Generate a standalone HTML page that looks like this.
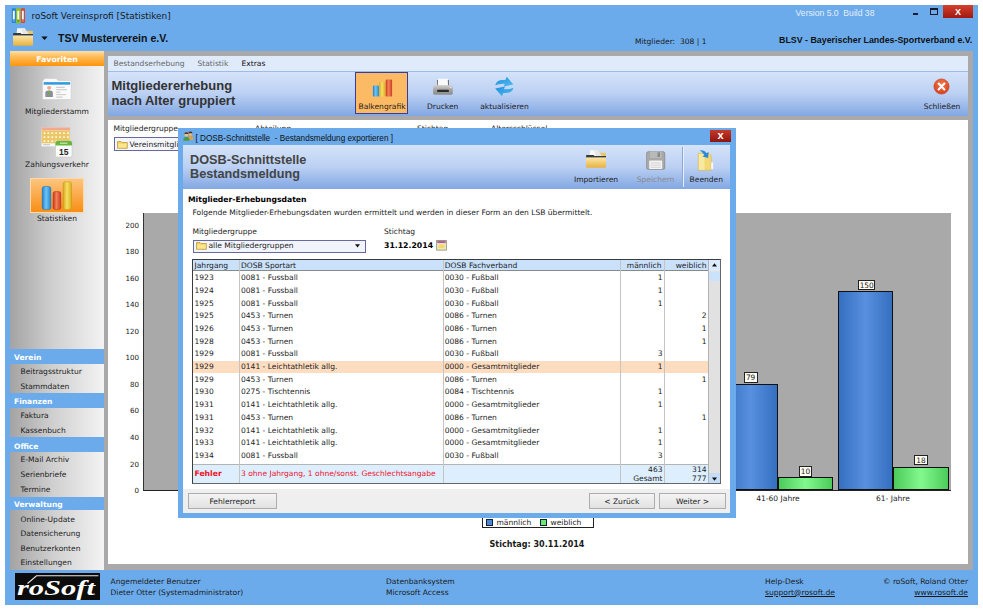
<!DOCTYPE html>
<html lang="de">
<head>
<meta charset="utf-8">
<title>roSoft Vereinsprofi [Statistiken]</title>
<style>
html,body{margin:0;padding:0;background:#fff;}
body{width:983px;height:610px;position:relative;overflow:hidden;font-family:"DejaVu Sans","Liberation Sans",sans-serif;font-size:7.55px;color:#1a1a1a;}
.a{position:absolute;}
.t{position:absolute;white-space:pre;line-height:12px;height:12px;font-size:7.55px;color:#1a1a1a;}
.ar{font-family:"Liberation Sans",sans-serif;}
.b{font-weight:bold;}
.c{text-align:center;}
.r{text-align:right;}
#win{left:5px;top:5px;width:973px;height:600px;background:#6babeb;}
#frame{left:104px;top:51px;width:869px;height:518.8px;background:#a9a9a9;}
#main{left:108px;top:56px;width:860px;height:508.4px;background:#fff;}
#menubar{left:108px;top:56px;width:860px;height:15px;background:#dfeafb;border-bottom:1px solid #9ebce9;}
#hdr{left:108px;top:72px;width:860px;height:44px;background:linear-gradient(#d5e3f9 0%,#bbd0f3 50%,#82a7e3 100%);}
#hdrgap{left:108px;top:116px;width:860px;height:3.5px;background:#a9a9a9;}
.side{left:10px;width:94px;background:linear-gradient(90deg,#a3a3a3 0%,#cfcfcf 45%,#f3f3f3 100%);}
.sh{position:absolute;left:14px;color:#fff;font-weight:bold;font-size:7.55px;white-space:pre;line-height:12px;}
.si{position:absolute;left:20.5px;font-size:7.55px;white-space:pre;line-height:12px;color:#1a1a1a;}

.yl{left:108px;width:31px;font-size:7.1px;}
.bb{background:linear-gradient(90deg,#356fc0 0%,#5990e0 50%,#356fc0 100%);border:1px solid #111;box-sizing:border-box;}
.bg{background:linear-gradient(90deg,#4ccb5a 0%,#82f98e 50%,#4ccb5a 100%);border:1px solid #111;box-sizing:border-box;}
.vl{background:#fffef2;border:1px solid #222;box-sizing:border-box;height:10.5px;line-height:9px;font-size:7.4px;}

#dlg{left:178px;top:128px;width:557.5px;height:390px;background:#6babeb;}
#dlghdr{left:183px;top:145px;width:547px;height:44px;background:linear-gradient(#d5e3f9 0%,#bbd0f3 50%,#82a7e3 100%);}
#dlgbody{left:183px;top:189px;width:547px;height:324px;background:linear-gradient(#fff 0,#fff 299.8px,#efefef 299.8px,#efefef 100%);}
#tbl{left:192px;top:259px;width:529px;height:225px;background:#fff;}
#rows{left:192.5px;top:0;width:516px;height:0;}
.row{left:0;width:516px;height:12.64px;}
.row .t{top:0.6px;}
.hl{background:#fddcc0;}
.btn{background:linear-gradient(#f4f4f4,#e2e2e2);border:1px solid #adadad;box-sizing:border-box;}
</style>
</head>
<body>
<div class="a" id="win"></div>

<!-- title bar -->
<div class="t" style="left:31.5px;top:10px;font-size:8.93px;">roSoft Vereinsprofi [Statistiken]</div>
<div class="t ar" style="left:795.6px;top:7.2px;font-size:8.6px;color:#e4eefc;">Version 5.0  Build 38</div>
<div class="t ar b" style="left:58px;top:32px;font-size:10.6px;color:#111;">TSV Musterverein e.V.</div>
<div class="t" style="left:635px;top:36px;">Mitglieder:  308 | 1</div>
<div class="t ar b" style="left:779px;top:34px;font-size:8.85px;color:#111;">BLSV - Bayerischer Landes-Sportverband e.V.</div>

<!-- sidebar -->
<div class="a side" style="top:51px;height:298px;"></div>
<div class="a" style="left:10px;top:51px;width:94px;height:14.8px;background:linear-gradient(#ffe0a2 0%,#ffba54 40%,#fc950c 100%);"></div>
<div class="t b c" style="left:10px;width:94px;top:53.8px;font-size:7.8px;color:#fff;">Favoriten</div>
<div class="t c" style="left:10px;width:94px;top:106.1px;font-size:7.55px;">Mitgliederstamm</div>
<div class="t c" style="left:10px;width:94px;top:159.3px;font-size:7.55px;">Zahlungsverkehr</div>
<div class="a" style="left:30px;top:177.8px;width:54px;height:35.4px;background:linear-gradient(#fec680,#f88d12);box-shadow:0 0 0 1px #fbd9a8 inset;"></div>
<div class="t c" style="left:10px;width:94px;top:213px;font-size:7.55px;">Statistiken</div>

<div class="sh" style="top:352.2px;">Verein</div>
<div class="a side" style="top:363.6px;height:29.6px;"></div>
<div class="si" style="top:366.4px;">Beitragsstruktur</div>
<div class="si" style="top:381.4px;">Stammdaten</div>
<div class="sh" style="top:396.2px;">Finanzen</div>
<div class="a side" style="top:407.7px;height:29.8px;"></div>
<div class="si" style="top:409.8px;">Faktura</div>
<div class="si" style="top:425.2px;">Kassenbuch</div>
<div class="sh" style="top:440.5px;">Office</div>
<div class="a side" style="top:452px;height:45px;"></div>
<div class="si" style="top:454px;">E-Mail Archiv</div>
<div class="si" style="top:468.5px;">Serienbriefe</div>
<div class="si" style="top:483.6px;">Termine</div>
<div class="sh" style="top:499.3px;">Verwaltung</div>
<div class="a side" style="top:510px;height:59.8px;"></div>
<div class="si" style="top:513.6px;">Online-Update</div>
<div class="si" style="top:527.8px;">Datensicherung</div>
<div class="si" style="top:542.6px;">Benutzerkonten</div>
<div class="si" style="top:557.3px;">Einstellungen</div>

<!-- main frame -->
<div class="a" id="frame"></div>
<div class="a" id="main"></div>
<div class="a" id="menubar"></div>
<div class="a" id="hdr"></div>
<div class="a" id="hdrgap"></div>
<div class="t" style="left:113.5px;top:58px;color:#666;">Bestandserhebung</div>
<div class="t" style="left:197.5px;top:58px;color:#666;">Statistik</div>
<div class="t" style="left:241.5px;top:58px;color:#111;">Extras</div>
<div class="t ar b" style="left:111.5px;top:78.8px;font-size:13px;line-height:14px;color:#333;">Mitgliedererhebung</div>
<div class="t ar b" style="left:111.5px;top:93.8px;font-size:13px;line-height:14px;color:#333;">nach Alter gruppiert</div>


<!-- filter labels behind dialog -->
<div class="t" style="left:113.5px;top:122.5px;">Mitgliedergruppe</div>
<div class="t" style="left:255px;top:122.5px;">Abteilung</div>
<div class="t" style="left:417px;top:122.5px;">Stichtag</div>
<div class="t" style="left:491px;top:122.5px;">Altersschlüssel</div>
<div class="a" style="left:113.5px;top:137px;width:120px;height:13.6px;border:1px solid #66689e;background:#f4f6fc;box-sizing:border-box;"></div>
<div class="t" style="left:129.5px;top:138.9px;">Vereinsmitglieder</div>

<!-- chart -->
<div class="a" style="left:143.5px;top:212.5px;width:807.5px;height:277.5px;background:#a9a9a9;"></div>
<div class="a" style="left:143px;top:490px;width:808px;height:1px;background:#222;"></div>
<div class="a" style="left:143px;top:212.5px;width:1px;height:278px;background:#333;"></div>
<div class="t r yl" style="top:219.60px;">200</div>
<div class="t r yl" style="top:246.15px;">180</div>
<div class="t r yl" style="top:272.70px;">160</div>
<div class="t r yl" style="top:299.25px;">140</div>
<div class="t r yl" style="top:325.80px;">120</div>
<div class="t r yl" style="top:352.35px;">100</div>
<div class="t r yl" style="top:378.90px;">80</div>
<div class="t r yl" style="top:405.45px;">60</div>
<div class="t r yl" style="top:432.00px;">40</div>
<div class="t r yl" style="top:458.55px;">20</div>
<div class="t r yl" style="top:485.10px;">0</div>
<div class="a bb" style="left:722.5px;top:384.3px;width:55px;height:105.7px;"></div>
<div class="a bg" style="left:778px;top:477px;width:55px;height:13px;"></div>
<div class="a bb" style="left:838.2px;top:291.2px;width:55px;height:198.8px;"></div>
<div class="a bg" style="left:893px;top:466.5px;width:56px;height:23.5px;"></div>
<div class="t c vl" style="left:743.6px;width:14px;top:372.2px;">79</div>
<div class="t c vl" style="left:798.8px;width:13.5px;top:466px;">10</div>
<div class="t c vl" style="left:858px;width:17.4px;top:279.6px;">150</div>
<div class="t c vl" style="left:914.2px;width:13.5px;top:454.5px;">18</div>
<div class="t c" style="left:728px;width:100px;top:492.9px;">41-60 Jahre</div>
<div class="t c" style="left:843px;width:100px;top:492.9px;">61- Jahre</div>
<div class="a" style="left:482.4px;top:510px;width:112px;height:18px;border:1px solid #222;box-sizing:border-box;background:#fff;"></div>
<div class="a" style="left:485.8px;top:518.6px;width:7px;height:7px;background:#4a86d8;border:1px solid #123;box-sizing:border-box;"></div>
<div class="t" style="left:496.5px;top:516.8px;">männlich</div>
<div class="a" style="left:539.5px;top:518.6px;width:7px;height:7px;background:#6be878;border:1px solid #123;box-sizing:border-box;"></div>
<div class="t" style="left:550.5px;top:516.8px;">weiblich</div>
<div class="t b c" style="left:437px;width:200px;top:539px;font-size:8.05px;">Stichtag: 30.11.2014</div>


<!-- dialog -->
<div class="a" id="dlg"></div>
<div class="a" id="dlghdr"></div>
<div class="a" id="dlgbody"></div>
<div class="t ar" style="left:195.5px;top:132.6px;font-size:8.2px;color:#111;">[ DOSB-Schnittstelle  - Bestandsmeldung exportieren ]</div>
<div class="a" style="left:710.2px;top:129.6px;width:20.8px;height:12.4px;background:linear-gradient(#c83826,#8c1610);"></div>
<div class="t ar b c" style="left:710.2px;width:20.8px;top:128.6px;font-size:11px;color:#fff;">x</div>
<div class="t ar b" style="left:190px;top:152.6px;font-size:12.7px;line-height:14px;color:#444;">DOSB-Schnittstelle</div>
<div class="t ar b" style="left:190px;top:167px;font-size:12.7px;line-height:14px;color:#444;">Bestandsmeldung</div>
<div class="t c" style="left:566px;width:60px;top:173.7px;">Importieren</div>
<div class="t c" style="left:625.5px;width:60px;top:173.7px;color:#8a8a8a;">Speichern</div>
<div class="t c" style="left:676.3px;width:60px;top:173.7px;">Beenden</div>
<div class="a" style="left:681.5px;top:147px;width:1px;height:40px;background:#8aa6dc;"></div>
<div class="a" style="left:682.5px;top:147px;width:1px;height:40px;background:#e8f0fc;"></div>

<div class="t b" style="left:188px;top:193.5px;font-size:7.67px;color:#000;">Mitglieder-Erhebungsdaten</div>
<div class="t" style="left:192.5px;top:206.9px;">Folgende Mitglieder-Erhebungsdaten wurden ermittelt und werden in dieser Form an den LSB übermittelt.</div>
<div class="t" style="left:192.5px;top:226.1px;">Mitgliedergruppe</div>
<div class="t" style="left:384px;top:226.1px;">Stichtag</div>
<div class="a" style="left:192.5px;top:239.7px;width:173px;height:13px;border:1px solid #66689e;background:#f1f4fb;box-sizing:border-box;"></div>
<div class="t" style="left:208.5px;top:240.3px;">alle Mitgliedergruppen</div>
<svg class="a" style="left:355px;top:244.3px;" width="5" height="4" viewBox="0 0 5 4"><path d="M0 0.300 L2.500 3.500 L5 0.300 Z" fill="#111"/></svg>
<div class="t b" style="left:384px;top:240.1px;font-size:7.75px;color:#000;">31.12.2014</div>

<div class="a" id="tbl">
<div class="a" style="left:0;top:0;width:529px;height:11.2px;background:#c9e1fb;border-bottom:1px solid #8a8a8a;"></div>
<div class="a" style="left:0;top:204.6px;width:517px;height:20.4px;background:#ddeeff;border-top:1px solid #b4b4b4;box-sizing:border-box;"></div>
</div>
<div class="a" id="rows">
<div class="a row" style="top:271.75px;"><span class="t" style="left:2px;">1923</span><span class="t" style="left:48.5px;">0081 - Fussball</span><span class="t" style="left:252.2px;">0030 - Fußball</span><span class="t r" style="left:428px;width:42px;">1</span><span class="t r" style="left:472px;width:42px;"></span></div>
<div class="a row" style="top:284.43px;"><span class="t" style="left:2px;">1924</span><span class="t" style="left:48.5px;">0081 - Fussball</span><span class="t" style="left:252.2px;">0030 - Fußball</span><span class="t r" style="left:428px;width:42px;">1</span><span class="t r" style="left:472px;width:42px;"></span></div>
<div class="a row" style="top:297.11px;"><span class="t" style="left:2px;">1925</span><span class="t" style="left:48.5px;">0081 - Fussball</span><span class="t" style="left:252.2px;">0030 - Fußball</span><span class="t r" style="left:428px;width:42px;">1</span><span class="t r" style="left:472px;width:42px;"></span></div>
<div class="a row" style="top:309.79px;"><span class="t" style="left:2px;">1925</span><span class="t" style="left:48.5px;">0453 - Turnen</span><span class="t" style="left:252.2px;">0086 - Turnen</span><span class="t r" style="left:428px;width:42px;"></span><span class="t r" style="left:472px;width:42px;">2</span></div>
<div class="a row" style="top:322.47px;"><span class="t" style="left:2px;">1926</span><span class="t" style="left:48.5px;">0453 - Turnen</span><span class="t" style="left:252.2px;">0086 - Turnen</span><span class="t r" style="left:428px;width:42px;"></span><span class="t r" style="left:472px;width:42px;">1</span></div>
<div class="a row" style="top:335.15px;"><span class="t" style="left:2px;">1928</span><span class="t" style="left:48.5px;">0453 - Turnen</span><span class="t" style="left:252.2px;">0086 - Turnen</span><span class="t r" style="left:428px;width:42px;"></span><span class="t r" style="left:472px;width:42px;">1</span></div>
<div class="a row" style="top:347.83px;"><span class="t" style="left:2px;">1929</span><span class="t" style="left:48.5px;">0081 - Fussball</span><span class="t" style="left:252.2px;">0030 - Fußball</span><span class="t r" style="left:428px;width:42px;">3</span><span class="t r" style="left:472px;width:42px;"></span></div>
<div class="a row hl" style="top:360.51px;"><span class="t" style="left:2px;">1929</span><span class="t" style="left:48.5px;">0141 - Leichtathletik allg.</span><span class="t" style="left:252.2px;">0000 - Gesamtmitglieder</span><span class="t r" style="left:428px;width:42px;">1</span><span class="t r" style="left:472px;width:42px;"></span></div>
<div class="a row" style="top:373.19px;"><span class="t" style="left:2px;">1929</span><span class="t" style="left:48.5px;">0453 - Turnen</span><span class="t" style="left:252.2px;">0086 - Turnen</span><span class="t r" style="left:428px;width:42px;"></span><span class="t r" style="left:472px;width:42px;">1</span></div>
<div class="a row" style="top:385.87px;"><span class="t" style="left:2px;">1930</span><span class="t" style="left:48.5px;">0275 - Tischtennis</span><span class="t" style="left:252.2px;">0084 - Tischtennis</span><span class="t r" style="left:428px;width:42px;">1</span><span class="t r" style="left:472px;width:42px;"></span></div>
<div class="a row" style="top:398.55px;"><span class="t" style="left:2px;">1931</span><span class="t" style="left:48.5px;">0141 - Leichtathletik allg.</span><span class="t" style="left:252.2px;">0000 - Gesamtmitglieder</span><span class="t r" style="left:428px;width:42px;">1</span><span class="t r" style="left:472px;width:42px;"></span></div>
<div class="a row" style="top:411.23px;"><span class="t" style="left:2px;">1931</span><span class="t" style="left:48.5px;">0453 - Turnen</span><span class="t" style="left:252.2px;">0086 - Turnen</span><span class="t r" style="left:428px;width:42px;"></span><span class="t r" style="left:472px;width:42px;">1</span></div>
<div class="a row" style="top:423.91px;"><span class="t" style="left:2px;">1932</span><span class="t" style="left:48.5px;">0141 - Leichtathletik allg.</span><span class="t" style="left:252.2px;">0000 - Gesamtmitglieder</span><span class="t r" style="left:428px;width:42px;">1</span><span class="t r" style="left:472px;width:42px;"></span></div>
<div class="a row" style="top:436.59px;"><span class="t" style="left:2px;">1933</span><span class="t" style="left:48.5px;">0141 - Leichtathletik allg.</span><span class="t" style="left:252.2px;">0000 - Gesamtmitglieder</span><span class="t r" style="left:428px;width:42px;">1</span><span class="t r" style="left:472px;width:42px;"></span></div>
<div class="a row" style="top:449.27px;"><span class="t" style="left:2px;">1934</span><span class="t" style="left:48.5px;">0081 - Fussball</span><span class="t" style="left:252.2px;">0030 - Fußball</span><span class="t r" style="left:428px;width:42px;">3</span><span class="t r" style="left:472px;width:42px;"></span></div>
</div>
<div class="a" style="left:239px;top:259px;width:1px;height:225px;background:#c4c4c4;"></div>
<div class="a" style="left:443px;top:259px;width:1px;height:225px;background:#c4c4c4;"></div>
<div class="a" style="left:620.4px;top:259px;width:1px;height:225px;background:#c4c4c4;"></div>
<div class="a" style="left:664.2px;top:259px;width:1px;height:225px;background:#c4c4c4;"></div>
<div class="a" style="left:708.3px;top:259px;width:12.7px;height:225px;background:#e1e1e1;border-left:1px solid #b4b4b4;box-sizing:border-box;"></div>
<div class="a" style="left:709.3px;top:271.6px;width:11.7px;height:9.6px;background:#cbe2fb;"></div>
<div class="a" style="left:709.3px;top:260px;width:11.7px;height:10.6px;background:#dbeafc;"></div>
<svg class="a" style="left:712.3px;top:263.3px;" width="5" height="4" viewBox="0 0 5 4"><path d="M0 3.5 L2.500 0.300 L5 3.500 Z" fill="#111"/></svg>
<div class="a" style="left:709.3px;top:472.7px;width:11.7px;height:10.8px;background:#c4dcf8;"></div>
<svg class="a" style="left:712.3px;top:477px;" width="5" height="4" viewBox="0 0 5 4"><path d="M0 0.500 L2.500 3.700 L5 0.500 Z" fill="#111"/></svg>
<div class="a" style="left:192px;top:259px;width:529px;height:225px;border:1px solid #3c3c3c;border-right-color:#666;border-bottom-color:#666;box-sizing:border-box;"></div>
<div class="t" style="left:194.5px;top:259.5px;">Jahrgang</div>
<div class="t" style="left:241px;top:259.5px;">DOSB Sportart</div>
<div class="t" style="left:444.8px;top:259.5px;">DOSB Fachverband</div>
<div class="t r" style="left:619.5px;width:42px;top:259.5px;">männlich</div>
<div class="t r" style="left:664.5px;width:42px;top:259.5px;">weiblich</div>
<div class="t b" style="left:194.5px;top:467.8px;color:#f0101c;font-size:7.67px;">Fehler</div>
<div class="t" style="left:241px;top:467.8px;color:#f0101c;">3 ohne Jahrgang, 1 ohne/sonst. Geschlechtsangabe</div>
<div class="t r" style="left:620.5px;width:42px;top:463.7px;">463</div>
<div class="t r" style="left:620.5px;width:42px;top:472.6px;">Gesamt</div>
<div class="t r" style="left:664.5px;width:42px;top:463.7px;">314</div>
<div class="t r" style="left:664.5px;width:42px;top:472.6px;">777</div>

<div class="a btn" style="left:188px;top:493.2px;width:89px;height:15.4px;"></div>
<div class="t c" style="left:188px;width:89px;top:495.8px;">Fehlerreport</div>
<div class="a btn" style="left:589px;top:493.2px;width:65.5px;height:15.4px;"></div>
<div class="t c" style="left:589px;width:65.5px;top:495.8px;">&lt; Zurück</div>
<div class="a btn" style="left:659.3px;top:493.2px;width:66.3px;height:15.4px;"></div>
<div class="t c" style="left:659.5px;width:66px;top:495.8px;">Weiter &gt;</div>


<!-- icons -->
<svg class="a" style="left:11px;top:7px;" width="16" height="18" viewBox="0 0 16 18">
 <rect x="0.800" y="1.300" width="4.300" height="14.800" rx="0.700" fill="#2e86c6"/><rect x="1.900" y="3.800" width="1.900" height="8.600" fill="#f6f6f6"/><rect x="2.200" y="13.300" width="1.400" height="1.200" fill="#8ec0e4"/>
 <rect x="5.100" y="1" width="4.400" height="15.300" rx="0.700" fill="#8fbc2a"/><rect x="6.300" y="3.800" width="1.900" height="8.600" fill="#f6f6f6"/><rect x="6.600" y="13.300" width="1.400" height="1.200" fill="#5a7a18"/>
 <rect x="9.900" y="1.200" width="4.100" height="14.800" rx="0.700" fill="#d8492a"/><rect x="10.900" y="3.800" width="1.900" height="8.600" fill="#f6f6f6"/><rect x="11.200" y="13.300" width="1.400" height="1.200" fill="#eea08c"/>
</svg>
<svg class="a" style="left:12px;top:27px;" width="23" height="20" viewBox="0 0 23 20">
 <defs><linearGradient id="fg" x1="0" x2="0" y1="0" y2="1"><stop offset="0" stop-color="#fae6aa"/><stop offset="1" stop-color="#e9b13e"/></linearGradient></defs>
 <path d="M15 3.800 H20.300 Q20.900 3.800 20.900 4.500 V8 H15 Z" fill="#eac66a"/>
 <path d="M5.200 1.200 L12.600 1.200 L16.600 6.900 L4.600 6.900 Z" fill="#f8f8f8"/>
 <path d="M9 1.200 L12.600 1.200 L16.600 6.900 H11 Z" fill="#e6e6e6"/>
 <path d="M1.100 6.600 Q1.100 5.900 1.800 5.900 H8.500 L9.500 7 H21 V8.800 H1.100 Z" fill="#3a3a3a"/>
 <path d="M1.100 8.600 H21 V17.800 Q21 18.700 20.100 18.700 H2 Q1.100 18.700 1.100 17.800 Z" fill="url(#fg)"/>
</svg>
<svg class="a" style="left:40.500px;top:35.700px;" width="7" height="5" viewBox="0 0 7 5"><path d="M0.300 0.400 H6.700 L3.500 4 Z" fill="#111"/></svg>

<!-- Mitgliederstamm card -->
<svg class="a" style="left:41.300px;top:77.700px;" width="32.400" height="23.500" viewBox="0 0 30 24" preserveAspectRatio="none">
 <path d="M3 1.5 Q3 0.5 4 0.5 H14 L16 2.5 H27 Q28 2.5 28 3.5 V21 Q28 22 27 22 H2.5 Q1.5 22 1.5 21 V3 Z" fill="#fafafa" stroke="#cfcfcf" stroke-width="0.7"/>
 <rect x="2.5" y="4.2" width="24.5" height="2.6" fill="#2f9be0"/>
 <circle cx="7.5" cy="10" r="1.9" fill="#f0a88c"/>
 <path d="M4 19.5 V15 Q4 12.8 7.5 12.8 Q11 12.8 11 15 V19.5 Z" fill="#8a8f96"/>
 <path d="M6.5 13 L7.5 18 L8.5 13 Z" fill="#6bb43a"/>
 <rect x="14" y="9" width="8" height="1" fill="#c4c4c4"/><rect x="14" y="11.5" width="10" height="1" fill="#c4c4c4"/><rect x="14" y="14" width="4" height="1" fill="#c4c4c4"/><rect x="14" y="16.5" width="9" height="1" fill="#c4c4c4"/><rect x="14" y="19" width="6" height="1" fill="#c4c4c4"/>
</svg>

<!-- Zahlungsverkehr calendar -->
<svg class="a" style="left:40px;top:126px;" width="35" height="32" viewBox="0 0 35 32">
 <rect x="1.500" y="1.500" width="28.500" height="19" fill="#f8f8f8" stroke="#d8d8d8" stroke-width="0.600"/>
 <rect x="1.500" y="1.500" width="28.500" height="3" fill="#f2a98e"/>
 <rect x="1.800" y="4.500" width="27.900" height="12.800" fill="#ecc768"/>
 <g fill="#fff8e0"><rect x="3.6" y="6.3" width="1.700" height="1.700"/><rect x="7.5" y="6.3" width="1.700" height="1.700"/><rect x="11.4" y="6.3" width="1.700" height="1.700"/><rect x="15.3" y="6.3" width="1.700" height="1.700"/><rect x="19.2" y="6.3" width="1.700" height="1.700"/><rect x="23.1" y="6.3" width="1.700" height="1.700"/><rect x="27.0" y="6.3" width="1.700" height="1.700"/><rect x="3.6" y="10.3" width="1.700" height="1.700"/><rect x="7.5" y="10.3" width="1.700" height="1.700"/><rect x="11.4" y="10.3" width="1.700" height="1.700"/><rect x="15.3" y="10.3" width="1.700" height="1.700"/><rect x="19.2" y="10.3" width="1.700" height="1.700"/><rect x="23.1" y="10.3" width="1.700" height="1.700"/><rect x="27.0" y="10.3" width="1.700" height="1.700"/><rect x="3.6" y="14.3" width="1.700" height="1.700"/><rect x="7.5" y="14.3" width="1.700" height="1.700"/><rect x="11.4" y="14.3" width="1.700" height="1.700"/><rect x="15.3" y="14.3" width="1.700" height="1.700"/></g>
 <rect x="3" y="18.300" width="7" height="0.900" fill="#bbb"/>
 <rect x="15.500" y="15" width="16.500" height="16" rx="1.500" fill="#fdfdfd" stroke="#c8c8c8" stroke-width="0.600"/>
 <path d="M15.500 19.500 V16.500 Q15.500 15 17 15 H30.500 Q32 15 32 16.500 V19.500 Z" fill="#66b83c"/>
 <rect x="20" y="16.600" width="7.500" height="1.200" fill="#cfe8b8"/>
 <text x="23.800" y="28.800" font-family="Liberation Sans, sans-serif" font-weight="bold" font-size="8.5" text-anchor="middle" fill="#222">15</text>
</svg>

<!-- Statistiken bars -->
<svg class="a" style="left:30px;top:177.800px;" width="54" height="35.400" viewBox="0 0 54 35.400">
 <defs>
  <linearGradient id="gb" x1="0" x2="1" y1="0" y2="0"><stop offset="0" stop-color="#1f7fcf"/><stop offset="0.45" stop-color="#6ec6f4"/><stop offset="1" stop-color="#1f86d6"/></linearGradient>
  <linearGradient id="gr" x1="0" x2="1" y1="0" y2="0"><stop offset="0" stop-color="#c8381c"/><stop offset="0.45" stop-color="#f0825a"/><stop offset="1" stop-color="#cc3c20"/></linearGradient>
  <linearGradient id="gy" x1="0" x2="1" y1="0" y2="0"><stop offset="0" stop-color="#d8a818"/><stop offset="0.45" stop-color="#f6e068"/><stop offset="1" stop-color="#dcae1c"/></linearGradient>
 </defs>
 <rect x="12.200" y="8.500" width="8.600" height="22.900" rx="2" fill="url(#gb)" stroke="#1a6cb4" stroke-width="0.5"/>
 <rect x="23.050" y="13.600" width="7.750" height="17.800" rx="2" fill="url(#gr)" stroke="#b03018" stroke-width="0.5"/>
 <rect x="33.200" y="3.800" width="8.300" height="27.600" rx="2" fill="url(#gy)" stroke="#c09814" stroke-width="0.5"/>
</svg>

<!-- toolbar: Balkengrafik -->
<div class="a" style="left:355px;top:72px;width:53px;height:42px;background:#fdba64;border:1px solid #3a3c9c;box-sizing:border-box;"></div>
<svg class="a" style="left:370px;top:77px;" width="26" height="22" viewBox="0 0 26 22">
 <rect x="2.9" y="8.6" width="6.1" height="11" rx="1.2" fill="url(#gb)"/>
 <rect x="9.3" y="4.9" width="5.9" height="14.7" rx="1.2" fill="url(#gy)"/>
 <rect x="15.7" y="2.500" width="6.4" height="17.100" rx="1.2" fill="url(#gr)"/>
</svg>
<div class="t c" style="left:352px;width:60px;top:100.9px;">Balkengrafik</div>
<div class="t c" style="left:412.7px;width:60px;top:100.9px;">Drucken</div>
<div class="t c" style="left:474.5px;width:60px;top:100.9px;">aktualisieren</div>
<div class="t c" style="left:912px;width:60px;top:100.9px;">Schließen</div>

<!-- printer -->
<svg class="a" style="left:432px;top:77px;" width="23" height="20" viewBox="0 0 23 20">
 <defs><linearGradient id="pg" x1="0" x2="0" y1="0" y2="1"><stop offset="0" stop-color="#d2d2d2"/><stop offset="0.5" stop-color="#a2a2a2"/><stop offset="1" stop-color="#8c8c8c"/></linearGradient></defs>
 <path d="M5 3 H16.800 V9 H5 Z" fill="#5e5e5e"/>
 <path d="M6 1.800 H15.800 L16 8.700 H5.700 Z" fill="#fafafa"/>
 <path d="M3.400 8.200 H18.600 Q20.800 8.200 20.800 10.500 V16.300 Q20.800 17.700 19.400 17.700 H2.600 Q1.100 17.700 1.100 16.300 V10.500 Q1.100 8.200 3.400 8.200 Z" fill="url(#pg)"/>
 <rect x="5" y="12.800" width="12" height="2.300" rx="1" fill="#2c2c2c"/>
 <rect x="17.800" y="10" width="1.600" height="1" fill="#e8e8e8"/>
</svg>

<!-- refresh -->
<svg class="a" style="left:494px;top:76px;" width="21" height="22" viewBox="0 0 21 22">
 <defs><linearGradient id="rg" x1="0" x2="1" y1="0" y2="1"><stop offset="0" stop-color="#1e8ede"/><stop offset="1" stop-color="#52bdf2"/></linearGradient></defs>
 <path d="M1.200 9.300 Q2.500 3.600 9.500 3.900 L11.300 3.900 L12.800 0.800 L19.400 8.600 L9.600 10.400 L10.800 7.700 Q6 7.300 1.200 9.300 Z" fill="url(#rg)"/>
 <path d="M19.400 11.700 Q18.200 17.400 11.200 17.100 L9.400 17.100 L7.900 20.300 L1.200 12.400 L11 10.600 L9.800 13.300 Q14.600 13.700 19.400 11.700 Z" fill="url(#rg)"/>
</svg>

<!-- Schliessen -->
<svg class="a" style="left:933px;top:77.500px;" width="17" height="17" viewBox="0 0 17 17">
 <defs><radialGradient id="rc" cx="0.5" cy="0.35" r="0.7"><stop offset="0" stop-color="#f47a4a"/><stop offset="1" stop-color="#d43a1a"/></radialGradient></defs>
 <circle cx="8.5" cy="8.5" r="7.600" fill="url(#rc)" stroke="#c8401c" stroke-width="0.6"/>
 <path d="M5.600 5.600 L11.400 11.400 M11.400 5.600 L5.600 11.400" stroke="#fff" stroke-width="2.100" stroke-linecap="round"/>
</svg>

<!-- window controls -->
<div class="a" style="left:913px;top:13px;width:5px;height:2px;background:#1a1a2a;"></div>
<div class="a" style="left:930px;top:7.500px;width:7.500px;height:7px;border:1px solid #1a1a2a;border-top-width:2px;box-sizing:border-box;"></div>
<div class="a" style="left:943px;top:5px;width:30px;height:13.300px;background:linear-gradient(#d4402c,#a01810);"></div>
<div class="t ar b c" style="left:943px;width:30px;top:6.2px;font-size:9px;color:#fff;">X</div>


<!-- logo -->
<div class="a" style="left:15px;top:573.2px;width:85px;height:26.4px;background:#0c0c0c;"></div>
<svg class="a" style="left:15px;top:573.2px;" width="85" height="26.4" viewBox="0 0 85 26.4">
 <text x="2" y="21.8" font-family="Liberation Serif, serif" font-weight="bold" font-style="italic" font-size="21.5" fill="#fff" textLength="78" lengthAdjust="spacingAndGlyphs">roSoft</text>
 <path d="M12.500 10.500 L21.500 2.800 H83.400" fill="none" stroke="#e8e8e8" stroke-width="1.100"/>
</svg>

<!-- dialog title icon (two people) -->
<svg class="a" style="left:183px;top:130.500px;" width="11" height="11" viewBox="0 0 11 11">
 <circle cx="7.400" cy="2.900" r="2" fill="#e9b274"/><path d="M5.300 2.600 Q5.300 0.600 7.400 0.600 Q9.500 0.600 9.500 2.600 Q7.400 1.600 5.300 2.600 Z" fill="#3c2818"/>
 <path d="M4.800 8.800 V7.300 Q4.800 5.200 7.400 5.200 Q10.200 5.200 10.200 7.300 V8.800 Z" fill="#e8a030"/>
 <circle cx="3.400" cy="3.600" r="2" fill="#f0c088"/><path d="M1.300 3.300 Q1.300 1.300 3.400 1.300 Q5.500 1.300 5.500 3.300 Q3.400 2.300 1.300 3.300 Z" fill="#3c2818"/>
 <path d="M0.500 9.800 V8.100 Q0.500 5.900 3.400 5.900 Q6.400 5.900 6.400 8.100 V9.800 Z" fill="#4a9a3a"/>
</svg>

<!-- Importieren folder -->
<svg class="a" style="left:585px;top:148.800px;" width="23" height="20" viewBox="0 0 23 20">
 <path d="M15 3.800 H20.300 Q20.900 3.800 20.900 4.500 V8 H15 Z" fill="#eac66a"/>
 <path d="M5.200 1.200 L12.600 1.200 L16.600 6.900 L4.600 6.900 Z" fill="#f8f8f8"/>
 <path d="M9 1.200 L12.600 1.200 L16.600 6.900 H11 Z" fill="#e6e6e6"/>
 <path d="M1.100 6.600 Q1.100 5.900 1.800 5.900 H8.500 L9.500 7 H21 V8.800 H1.100 Z" fill="#3a3a3a"/>
 <path d="M1.100 8.600 H21 V17.800 Q21 18.700 20.100 18.700 H2 Q1.100 18.700 1.100 17.800 Z" fill="url(#fg)"/>
</svg>
<!-- Speichern floppy -->
<svg class="a" style="left:645px;top:150px;" width="22" height="21" viewBox="0 0 22 21">
 <rect x="1.200" y="1.200" width="19" height="18.600" rx="2.500" fill="#8f8f8f"/>
 <rect x="2" y="2" width="17.400" height="17" rx="2" fill="#a8a8a8"/>
 <rect x="5" y="1.500" width="11.500" height="6.500" fill="#b9b9b9"/>
 <rect x="12.500" y="2.300" width="2.500" height="4.800" fill="#8a8a8a"/>
 <rect x="4.200" y="10.500" width="13" height="8.500" rx="0.800" fill="#f4f4f4"/>
 <rect x="5.500" y="12.500" width="10.400" height="0.900" fill="#d0d0d0"/><rect x="5.500" y="14.700" width="10.400" height="0.900" fill="#d0d0d0"/><rect x="5.500" y="16.800" width="10.400" height="0.900" fill="#d0d0d0"/>
</svg>
<!-- Beenden -->
<svg class="a" style="left:696px;top:148.500px;" width="21" height="23" viewBox="0 0 21 23">
 <path d="M2.200 4.300 H13 L15.200 6.800 V21.300 H2.200 Z" fill="#f2d974" stroke="#d6b64e" stroke-width="0.600"/>
 <path d="M2.800 4.900 H8.500 V20.700 H2.800 Z" fill="#f8e9a2"/>
 <rect x="15" y="13" width="2.300" height="7.500" rx="1.100" fill="#fcfcfc" stroke="#c4c4c4" stroke-width="0.400"/>
 <path d="M3.500 1.300 Q9 1 10.400 4.300 L12.500 3 L12.200 9 L6.400 7.400 L8.300 6 Q7.200 3.300 3.500 1.300 Z" fill="#2a88de"/>
</svg>

<!-- small folder icons -->
<svg class="a" style="left:116.800px;top:139.600px;" width="11" height="9" viewBox="0 0 11 9"><path d="M0.500 1.500 H4 L5 2.500 H10.300 V8.300 H0.500 Z" fill="#f4cf5e" stroke="#b8902c" stroke-width="0.700"/><rect x="1.200" y="3.600" width="8.400" height="4" fill="#fae690"/></svg>
<svg class="a" style="left:195.500px;top:241.300px;" width="11" height="9" viewBox="0 0 11 9"><path d="M0.500 1.500 H4 L5 2.500 H10.300 V8.300 H0.500 Z" fill="#f4cf5e" stroke="#b8902c" stroke-width="0.700"/><rect x="1.200" y="3.600" width="8.400" height="4" fill="#fae690"/></svg>
<!-- calendar small -->
<svg class="a" style="left:436.300px;top:240.300px;" width="11" height="10.500" viewBox="0 0 10 10"><rect x="0.400" y="0.400" width="9.200" height="9.200" fill="#f6f0c8" stroke="#8a8a6a" stroke-width="0.800"/><rect x="1" y="1" width="8" height="2" fill="#b05aa0"/><rect x="2" y="4.200" width="6" height="3.800" fill="#f0d870"/></svg>

<!-- footer -->
<div class="t" style="left:110.5px;top:575.5px;">Angemeldeter Benutzer</div>
<div class="t" style="left:110.5px;top:586.7px;">Dieter Otter (Systemadministrator)</div>
<div class="t" style="left:386px;top:575.5px;">Datenbanksystem</div>
<div class="t" style="left:386px;top:586.7px;">Microsoft Access</div>
<div class="t" style="left:765px;top:575.5px;">Help-Desk</div>
<div class="t" style="left:765px;top:586.7px;text-decoration:underline;">support@rosoft.de</div>
<div class="t r" style="left:768px;width:200px;top:575.5px;">© roSoft, Roland Otter</div>
<div class="t r" style="left:768px;width:200px;top:586.7px;text-decoration:underline;">www.rosoft.de</div>

</body>
</html>
